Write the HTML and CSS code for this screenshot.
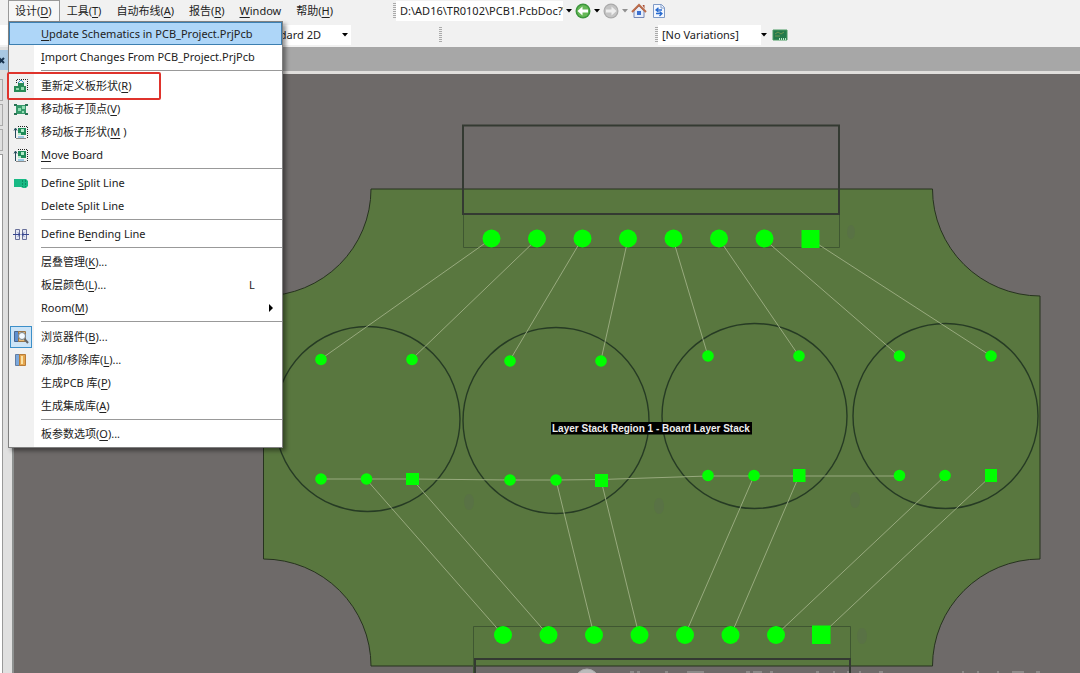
FILE: index.html
```html
<!DOCTYPE html>
<html lang="zh-CN">
<head>
<meta charset="utf-8">
<title>PCB1.PcbDoc</title>
<link rel="stylesheet" href="styles.css">
</head>
<body>
<div class="app">
  <header class="bars">
    <div class="bar">
      <nav class="menubar">
        <button class="menubar-item is-open">设计(<u>D</u>)</button>
        <button class="menubar-item">工具(<u>T</u>)</button>
        <button class="menubar-item">自动布线(<u>A</u>)</button>
        <button class="menubar-item">报告(<u>R</u>)</button>
        <button class="menubar-item"><u>W</u>indow</button>
        <button class="menubar-item">帮助(<u>H</u>)</button>
      </nav>
      <div class="tools">
        <span class="grip"></span>
        <input class="path" aria-label="路径" value="D:\AD16\TR0102\PCB1.PcbDoc?View">
        <button class="drop" aria-label="路径列表"><svg width="6" height="4"><path d="M0 0h6L3 3.500z"/></svg></button>
        <button class="tool" aria-label="后退"><svg width="16" height="16"><circle cx="8" cy="8" r="7.500" fill="#3d963d"/><circle cx="8" cy="8" r="6" fill="#66b957"/><path d="M2.500 8 7.500 3.500V6.500H13v3H7.500v3z" fill="#fff"/></svg></button>
        <button class="drop" aria-label="后退列表"><svg width="6" height="4"><path d="M0 0h6L3 3.500z"/></svg></button>
        <button class="tool" aria-label="前进"><svg width="16" height="16"><circle cx="8" cy="8" r="7.500" fill="#aaa"/><circle cx="8" cy="8" r="6.300" fill="#c4c4c4"/><path d="M13.500 8 8.500 3.500V6.500H3v3h5.500v3z" fill="#eee"/></svg></button>
        <button class="drop is-off" aria-label="前进列表"><svg width="6" height="4"><path d="M0 0h6L3 3.500z"/></svg></button>
        <button class="tool" aria-label="主页"><svg width="16" height="16"><path d="M3 8v6.500h10V8L8 3z" fill="#e6edfa" stroke="#7586b4"/><path d="M11.500 2h2v4z" fill="#a84c34"/><path d="M1 9 8 2l7 7" fill="none" stroke="#bb6c4a" stroke-width="2"/><path d="M6 8h4v4H6z" fill="#3c70d0"/></svg></button>
        <button class="tool" aria-label="刷新"><svg width="16" height="16"><path d="M2.500 1.500h8l3 3v10h-11z" fill="#f4f8ff" stroke="#809bc7"/><path d="M10 1.500v3.500h3.500" fill="none" stroke="#809bc7"/><path d="M11 7H6M7.500 4.800 5 7l2.500 2M5 10.500h5M8.500 8.500l2.500 2L8.500 13" fill="none" stroke="#286bcf" stroke-width="1.300"/></svg></button>
      </div>
    </div>
    <div class="bar">
      <div class="view">
        <select class="select view-select" aria-label="视图"><option>Altium Standard 2D</option></select>
        <svg class="arrow" width="6" height="4"><path d="M0 0h6L3 3.500z"/></svg>
      </div>
      <div class="variants-lead"><span class="grip"></span></div>
      <div class="variants">
        <span class="grip"></span>
        <select class="select variant-select" aria-label="变量"><option>[No Variations]</option></select>
        <svg class="arrow" width="6" height="4"><path d="M0 0h6L3 3.500z"/></svg>
        <button class="tool" aria-label="板"><svg width="16" height="12"><path d="M1 1h14v10H1z" fill="#237b4b" stroke="#4a9b63"/><path d="M3 5l3-2 3 2 3-2M3 7h5" fill="none" stroke="#6e9751"/><path d="M7 10h8" stroke="#b8eac8" stroke-width="2" stroke-dasharray="1 1"/></svg></button>
      </div>
    </div>
  </header>

  <div class="body">
    <aside class="side">
      <button class="side-close" aria-label="关闭"><svg width="7" height="7"><path d="M-1 1 4 6M4 1-1 6" stroke="#17324d" stroke-width="2"/></svg></button>
      <span class="side-field"></span>
      <span class="side-field"></span>
      <span class="side-field"></span>
      <span class="side-list"></span>
    </aside>
    <main class="doc">
      <div class="tabs"></div>
      <svg class="board" viewBox="14 74 1066 599" preserveAspectRatio="xMinYMin meet">
        <path class="outline" d="M371 189H932.500A108 107 0 0 0 1040 296V559A108 107 0 0 0 932.500 666H371A108 107 0 0 0 263.500 559V296A108 107 0 0 0 371 189Z"/>
        <g class="ghost">
          <ellipse cx="469" cy="502" rx="5" ry="8"/><ellipse cx="659" cy="506" rx="5" ry="8"/><ellipse cx="855" cy="500" rx="5" ry="8"/><ellipse cx="862" cy="636" rx="5" ry="8"/><ellipse cx="851" cy="232" rx="4" ry="7"/>
        </g>
        <g class="thin">
          <path d="M463.500 214V247.500H839.500V214M473.500 673V626.500H850.500V673"/>
        </g>
        <g class="thick">
          <path d="M463 125.500H839V214H463ZM475 673V659H850V673"/>
          <circle cx="367.500" cy="419" r="92.500"/><circle cx="556" cy="420.500" r="93"/><circle cx="754.500" cy="416" r="92.500"/><circle cx="945.500" cy="416" r="92.500"/>
        </g>
        <path class="net" d="M491 239 321 359M537 239 412 359M582 239 510 360M628 239 601 360M673 239 708 356M719 239 799 356M764 239 899 356M810 239 991 356M321 479H412L510 480H556L601 479.500 708 476H899M366 479 503 635M412 479 548 635M556 480 594 635M601 480 639 635M754 476 685 635M799 476 731 635M945 476 776 635M991 476 821 635"/>
        <g class="pad">
          <circle cx="491.500" cy="238.500" r="9"/><circle cx="537" cy="238.500" r="9"/><circle cx="582.500" cy="238.500" r="9"/><circle cx="628" cy="238.500" r="9"/><circle cx="673.500" cy="238.500" r="9"/><circle cx="719" cy="238.500" r="9"/><circle cx="764.500" cy="238.500" r="9"/><rect x="801.500" y="230" width="18" height="18"/>
          <circle cx="503" cy="635" r="9"/><circle cx="548.500" cy="635" r="9"/><circle cx="594" cy="635" r="9"/><circle cx="639.500" cy="635" r="9"/><circle cx="685" cy="635" r="9"/><circle cx="730.500" cy="635" r="9"/><circle cx="776" cy="635" r="9"/><rect x="812" y="625.500" width="18.500" height="18.500"/>
          <circle cx="321" cy="359.500" r="5.800"/><circle cx="412" cy="359.500" r="5.800"/><circle cx="510" cy="361" r="5.800"/><circle cx="601" cy="361" r="5.800"/><circle cx="708" cy="356" r="5.800"/><circle cx="799" cy="356" r="5.800"/><circle cx="899.500" cy="356" r="5.800"/><circle cx="991" cy="356" r="5.800"/>
          <circle cx="321" cy="479" r="5.800"/><circle cx="366.500" cy="479" r="5.800"/><rect x="406" y="473" width="13" height="12"/>
          <circle cx="510" cy="480" r="5.800"/><circle cx="556" cy="480" r="5.800"/><rect x="595" y="474" width="13" height="13"/>
          <circle cx="708" cy="475.500" r="5.800"/><circle cx="754" cy="475.500" r="5.800"/><rect x="793" y="469" width="12.500" height="13"/>
          <circle cx="899.500" cy="475.500" r="5.800"/><circle cx="945" cy="475.500" r="5.800"/><rect x="985" y="469" width="12" height="13"/>
        </g>
        <rect x="551" y="422" width="201" height="12.500"/>
        <text class="region" x="552" y="432">Layer Stack Region 1 - Board Layer Stack</text>
        <g class="mark">
          <circle cx="587" cy="681" r="12"/>
          <path d="M630 672h4M637 672h3M665 672h3M687 672h17M746 672h4M753 672h9M770 672h3M816 672h3M834 671v2M848 671v2M860 671v2M879 672h4M963 671v2M978 671v2M998 671v2M1012 672h12M1036 672h4"/>
        </g>
      </svg>
    </main>
  </div>

  <div class="menu" role="menu">
    <button class="item is-active"><span class="icon"></span><span class="label"><u>U</u>pdate Schematics in PCB_Project.PrjPcb</span></button>
    <button class="item"><span class="icon"></span><span class="label"><u>I</u>mport Changes From PCB_Project.PrjPcb</span></button>
    <hr class="rule rule-wide">
    <button class="item is-marked"><span class="icon"><svg width="16" height="16"><path d="M3.500 5V1.500h11V13" fill="none" stroke="#222" stroke-dasharray="1 1"/><path d="M1 8h4V5h6v3h2v6H1z" fill="#278b57"/><path d="M3 10h3v2H3zM8 9h3v3H8z" fill="#8fd8ab"/><path d="M5 5 8 2l3 3" fill="none" stroke="#3d91c9"/></svg></span><span class="label">重新定义板形状(<u>R</u>)</span></button>
    <button class="item"><span class="icon"><svg width="16" height="16"><path d="M3 4h10v9H3z" fill="#36996a"/><path d="M1 3h3v2H1zM12 3h3v2h-3zM1 12h3v2H1zM12 12h3v2h-3z" fill="#2b7355"/><path d="M5 7h3v3H5zM9 5h3v3H9zM9 10h2v2H9z" fill="#93ddb4"/></svg></span><span class="label">移动板子顶点(<u>V</u>)</span></button>
    <button class="item"><span class="icon"><svg width="16" height="16"><path d="M5 2.500h9.500V14M3.500 14.500h10" fill="none" stroke="#222" stroke-dasharray="1 1"/><path d="M2.500 5v9M1 6.500 2.500 4 4 6.500" fill="none" stroke="#24495a"/><path d="M5 4h8v7H5z" fill="#1f8c5a"/><path d="M8 5h3v3H8zM5 9h3v2H5z" fill="#b1ebc8"/><path d="M5 13h6" stroke="#48a2d8"/></svg></span><span class="label">移动板子形状(<u>M</u> )</span></button>
    <button class="item"><span class="icon"><svg width="16" height="16"><path d="M5 2.500h9.500V14M3.500 14.500h10" fill="none" stroke="#222" stroke-dasharray="1 1"/><path d="M2.500 5v9M1 6.500 2.500 4 4 6.500" fill="none" stroke="#24495a"/><path d="M5 4h8v7H5z" fill="#1f8c5a"/><path d="M8 5h3v3H8zM5 9h3v2H5z" fill="#b1ebc8"/><path d="M5 13h6" stroke="#48a2d8"/></svg></span><span class="label"><u>M</u>ove Board</span></button>
    <hr class="rule">
    <button class="item"><span class="icon"><svg width="16" height="16"><path d="M1 4h12l2 2v5l-2 2h-3l-2-1H1z" fill="#18b984"/><path d="M9.500 5v7M12.500 5v7" stroke="#0b8e63" stroke-dasharray="2 1"/></svg></span><span class="label">Define <u>S</u>plit Line</span></button>
    <button class="item"><span class="icon"></span><span class="label">Delete Split Line</span></button>
    <hr class="rule">
    <button class="item"><span class="icon"><svg width="16" height="16"><path d="M2.500 3.500h4v10h-4zM9.500 3.500h4v10h-4z" fill="#e4e7f4" stroke="#68709a"/><path d="M0 8.500h7M5 6.500l2 2-2 2M16 8.500H9M11 6.500l-2 2 2 2" fill="none" stroke="#36458f"/></svg></span><span class="label">Define B<u>e</u>nding Line</span></button>
    <hr class="rule">
    <button class="item"><span class="icon"></span><span class="label">层叠管理(<u>K</u>)...</span></button>
    <button class="item"><span class="icon"></span><span class="label">板层颜色(<u>L</u>)...</span><span class="key">L</span></button>
    <button class="item"><span class="icon"></span><span class="label">Room(<u>M</u>)</span><svg class="more" width="4" height="8"><path d="M0 0v8l4-4z"/></svg></button>
    <hr class="rule rule-wide">
    <button class="item"><span class="icon is-checked"><svg width="16" height="16"><path d="M1.500 2.500h4v10h-4z" fill="#5d8fd0" stroke="#48658f"/><path d="M5.500 2.500h7v10h-7z" fill="#e7bd79" stroke="#98754a"/><circle cx="9" cy="7" r="3.500" fill="#f3faff" stroke="#72818f"/><path d="m11.500 10 3.500 4" stroke="#646464" stroke-width="2"/></svg></span><span class="label">浏览器件(<u>B</u>)...</span></button>
    <button class="item"><span class="icon"><svg width="16" height="16"><path d="M2.500 2.500h4v11h-4z" fill="#7ba8dc" stroke="#627da3"/><path d="M6.500 2.500h6v11h-6z" fill="#e5a64f" stroke="#b77c38"/><path d="M9 4v8" stroke="#fae2a5" stroke-width="2"/></svg></span><span class="label">添加/移除库(<u>L</u>)...</span></button>
    <button class="item"><span class="icon"></span><span class="label">生成PCB 库(<u>P</u>)</span></button>
    <button class="item"><span class="icon"></span><span class="label">生成集成库(<u>A</u>)</span></button>
    <hr class="rule">
    <button class="item"><span class="icon"></span><span class="label">板参数选项(<u>O</u>)...</span></button>
  </div>
</div>
</body>
</html>
```

FILE: styles.css
```css
*, *::after { box-sizing: border-box; }
body { margin: 0; }
body, button, input, select {
  font-family: "Noto Sans", "Noto Sans CJK SC", sans-serif;
  font-size: 11px;
  line-height: 16px;
  color: #222;
}
button { border: 0; padding: 0; background: none; text-align: left; white-space: nowrap; }
u { text-underline-offset: 2px; }
.app { position: relative; display: flex; flex-direction: column; height: 100vh; overflow: hidden; background: #f0f0f0; }

.bars { display: flex; flex-direction: column; gap: 4px; padding-bottom: 2px; background: #f1f1f1; }
.bar { display: flex; align-items: center; height: 20px; }
.bar:first-child { height: 21px; }
.menubar { display: flex; align-self: stretch; padding-left: 8px; width: 393px; }
.menubar-item { padding: 0 7px 0 6px; border: 1px solid transparent; border-bottom: 0; }
.menubar-item.is-open { border-color: #999; background: #f7f7f7; }
.tools { display: flex; align-items: center; }
.grip { width: 3px; height: 16px; background: repeating-linear-gradient(#aaa 0 1px, transparent 1px 2px); }
.path { width: 167px; height: 20px; padding: 0 0 0 4px; border: 0; background: #fff; }
.drop { display: flex; justify-content: center; width: 12px; }
.is-off { opacity: .4; }
.tool { display: flex; justify-content: center; width: 16px; }
.tool + .tool { margin-left: 4px; }
.view { display: flex; align-items: center; width: 351px; padding-left: 8px; background: #fff; }
.select { appearance: none; border: 0; background: #fff; height: 20px; padding: 0; }
.view-select { flex: 1; text-align: right; padding-right: 21px; }
.arrow { margin-right: 3px; }
.variants-lead { display: flex; width: 304px; padding-left: 88px; }
.variants { display: flex; align-items: center; }
.variant-select { width: 103px; padding-left: 4px; }
.variants .tool { margin-left: 2px; }

.body { display: flex; flex: 1; min-height: 0; }
.side { display: flex; flex-direction: column; gap: 3px; width: 14px; padding-top: 3px; background: #e0e0e0; border-right: 2px solid #8f9291; }
.side-close { display: flex; align-items: center; width: 8px; height: 20px; margin-bottom: 6px; background: #a9c8e2; }
.side-field { width: 3px; height: 22px; border: 1px solid #aaa; border-left: 0; }
.side-list { flex: 1; width: 3px; border: 1px solid #999; border-left: 0; border-bottom: 0; background: #fff; }
.doc { display: flex; flex: 1; flex-direction: column; min-width: 0; background: #6e6a69; }
.tabs { height: 27px; flex: none; background: #a7a7a7; border-bottom: 3px solid #e0dedc; }
.board { display: block; width: 100%; }
.outline { fill: #59773f; stroke: #27331f; }
.ghost { fill: #597245; }
.thin { fill: none; stroke: #3f5731; }
.thick { fill: none; stroke: #343a32; stroke-width: 2; }
.thick circle { stroke: #263b24; stroke-width: 1.400; }
.net { fill: none; stroke: #98aa7e; }
.pad { fill: #0f0; }
.region { font: bold 10px "Liberation Sans", sans-serif; fill: #eee; }
.mark { fill: #bbb; stroke: #aaa; }

.menu {
  position: absolute; left: 8px; top: 21px; width: 275px;
  display: flex; flex-direction: column;
  padding-bottom: 2px; border: 1px solid #808080;
  background: linear-gradient(90deg, #f1f1f1 25px, #fff 25px);
  box-shadow: 3px 3px 4px rgba(0, 0, 0, .4);
}
.item { position: relative; display: flex; align-items: center; height: 23px; padding-right: 9px; }
.item.is-active { background: #aed6f8; outline: 1px solid #3c7fb1; outline-offset: -1px; }
.icon { display: flex; align-items: center; justify-content: center; width: 22px; height: 22px; margin: 0 9px 0 1px; }
.icon.is-checked { background: #cce4f7; border: 1px solid #3c8fc9; }
.label { flex: 1; }
.key { width: 24px; }
.rule { width: 241px; height: 1px; margin: 2px 0 2px auto; border: 0; background: #999; }
.rule-wide { margin-bottom: 3px; }
.is-marked::after {
  content: ""; position: absolute; left: -2px; top: -2px; width: 154px; height: 28px;
  border: 2px solid #df332c; border-radius: 2px;
}
```
